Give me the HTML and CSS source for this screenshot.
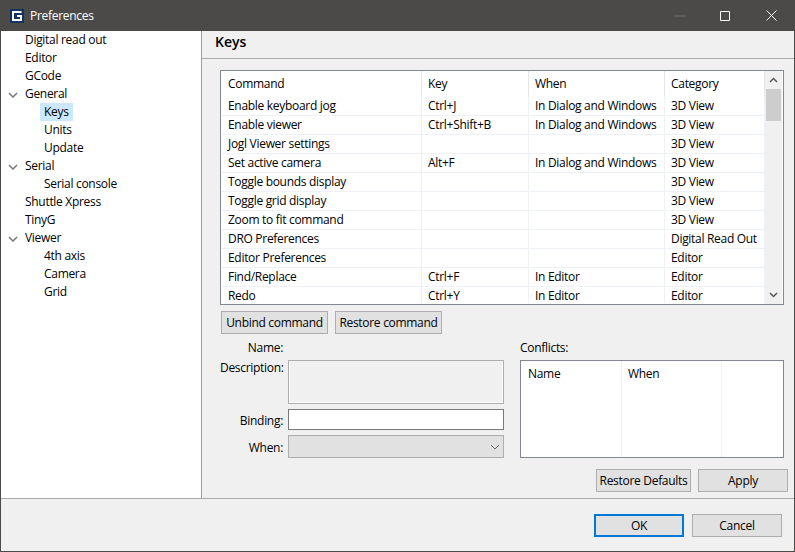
FILE: index.html
```html
<!DOCTYPE html>
<html lang="en">
<head>
<meta charset="utf-8">
<title>Preferences</title>
<link rel="stylesheet" href="styles.css">
</head>
<body>
<div class="window">
  <header class="titlebar">
    <svg class="app-icon" width="14" height="14" viewBox="0 0 14 14"><rect width="14" height="14" fill="#12355f"/><path d="M11.500 3H3v8h8V7H7" fill="none" stroke="#fff" stroke-width="2"/></svg>
    <span class="title">Preferences</span>
    <div class="controls">
      <svg class="ctl ctl-min" width="10" height="10" viewBox="0 0 10 10"><path d="M0 5h10" stroke="#77756f"/></svg>
      <svg class="ctl ctl-max" width="10" height="10" viewBox="0 0 10 10"><path d="M.5.5h9v9h-9z" fill="none" stroke="#fff"/></svg>
      <svg class="ctl ctl-close" width="11" height="11" viewBox="0 0 11 11"><path d="M.5.5l10 10M10.500.5l-10 10" stroke="#fff" fill="none"/></svg>
    </div>
  </header>
  <div class="body">
    <nav class="tree">
      <div class="node">Digital read out</div>
      <div class="node">Editor</div>
      <div class="node">GCode</div>
      <div class="node"><svg class="twist" width="10" height="6" viewBox="0 0 10 6"><path d="M1 1l4 4 4-4" fill="none" stroke="#777" stroke-width="1.500"/></svg>General</div>
      <div class="node sub"><span class="selected">Keys</span></div>
      <div class="node sub">Units</div>
      <div class="node sub">Update</div>
      <div class="node"><svg class="twist" width="10" height="6" viewBox="0 0 10 6"><path d="M1 1l4 4 4-4" fill="none" stroke="#777" stroke-width="1.500"/></svg>Serial</div>
      <div class="node sub">Serial console</div>
      <div class="node">Shuttle Xpress</div>
      <div class="node">TinyG</div>
      <div class="node"><svg class="twist" width="10" height="6" viewBox="0 0 10 6"><path d="M1 1l4 4 4-4" fill="none" stroke="#777" stroke-width="1.500"/></svg>Viewer</div>
      <div class="node sub">4th axis</div>
      <div class="node sub">Camera</div>
      <div class="node sub">Grid</div>
    </nav>
    <main class="page">
      <h1 class="page-title">Keys</h1>
      <div class="page-body">
        <div class="keys-table">
          <div class="cols">
            <div class="row head"><span>Command</span><span>Key</span><span>When</span><span>Category</span></div>
            <div class="row"><span>Enable keyboard jog</span><span>Ctrl+J</span><span>In Dialog and Windows</span><span>3D View</span></div>
            <div class="row"><span>Enable viewer</span><span>Ctrl+Shift+B</span><span>In Dialog and Windows</span><span>3D View</span></div>
            <div class="row"><span>Jogl Viewer settings</span><span></span><span></span><span>3D View</span></div>
            <div class="row"><span>Set active camera</span><span>Alt+F</span><span>In Dialog and Windows</span><span>3D View</span></div>
            <div class="row"><span>Toggle bounds display</span><span></span><span></span><span>3D View</span></div>
            <div class="row"><span>Toggle grid display</span><span></span><span></span><span>3D View</span></div>
            <div class="row"><span>Zoom to fit command</span><span></span><span></span><span>3D View</span></div>
            <div class="row"><span>DRO Preferences</span><span></span><span></span><span>Digital Read Out</span></div>
            <div class="row"><span>Editor Preferences</span><span></span><span></span><span>Editor</span></div>
            <div class="row"><span>Find/Replace</span><span>Ctrl+F</span><span>In Editor</span><span>Editor</span></div>
            <div class="row"><span>Redo</span><span>Ctrl+Y</span><span>In Editor</span><span>Editor</span></div>
          </div>
          <div class="scrollbar">
            <svg width="9" height="6" viewBox="0 0 9 6"><path d="M1 5l3.500-3.500L8 5" fill="none" stroke="#555" stroke-width="1.500"/></svg>
            <div class="thumb"></div>
            <svg class="down" width="9" height="6" viewBox="0 0 9 6"><path d="M1 1l3.500 3.500L8 1" fill="none" stroke="#555" stroke-width="1.500"/></svg>
          </div>
        </div>
        <div class="cmd-buttons">
          <button class="btn unbind">Unbind command</button>
          <button class="btn restore">Restore command</button>
        </div>
        <div class="detail">
          <div class="form">
            <label class="lbl lbl-name">Name:</label><div class="name-val"></div>
            <label class="lbl lbl-top">Description:</label><div class="desc"></div>
            <label class="lbl lbl-binding">Binding:</label><div class="binding"></div>
            <label class="lbl lbl-when">When:</label>
            <div class="combo"><svg width="10" height="6" viewBox="0 0 10 6"><path d="M1 1l4 4 4-4" fill="none" stroke="#666"/></svg></div>
          </div>
          <div class="conflicts">
            <div class="conf-label">Conflicts:</div>
            <div class="conf-table">
              <div class="conf-col c1"><span>Name</span></div>
              <div class="conf-col c2"><span>When</span></div>
              <div class="conf-col c3"></div>
            </div>
          </div>
        </div>
        <div class="page-actions">
          <button class="btn defaults">Restore Defaults</button>
          <button class="btn wide">Apply</button>
        </div>
      </div>
    </main>
  </div>
  <footer class="footer">
    <button class="btn wide ok">OK</button>
    <button class="btn wide">Cancel</button>
  </footer>
</div>
</body>
</html>
```
FILE: styles.css
```css
* { box-sizing: border-box; }
html, body { margin: 0; padding: 0; }
body { width: 795px; height: 552px; overflow: hidden; font: 12px/16px "Open Sans", "Noto Sans", sans-serif; letter-spacing: -.3px; color: #000; }
.window { width: 795px; height: 552px; display: flex; flex-direction: column; background: #f0f0f0; border: 1px solid #4c4a48; border-top: 0; }
.titlebar { height: 31px; flex: none; margin: 0 -1px; background: #4c4a48; color: #fff; display: flex; align-items: center; padding-left: 10px; }
.title { margin-left: 6px; padding-top: 1px; }
.controls { margin-left: auto; display: flex; align-items: center; }
.ctl { display: block; }
.ctl-min { margin-right: 35px; }
.ctl-max { margin-right: 36px; }
.ctl-close { margin-right: 18px; }
.body { flex: 1; display: flex; min-height: 0; }
.tree { width: 201px; flex: none; background: #fff; border-right: 1px solid #a0a0a0; }
.node { height: 18px; line-height: 18px; padding-left: 24px; position: relative; white-space: nowrap; }
.node.sub { padding-left: 43px; }
.selected { display: inline-block; background: #cce8ff; padding: 0 4px; margin-left: -4px; height: 18px; }
.twist { position: absolute; left: 7px; top: 7px; }
.page { flex: 1; display: flex; flex-direction: column; min-width: 0; }
.page-title { margin: 0; height: 28px; flex: none; border-bottom: 1px solid #a9a9a9; padding: 2px 0 0 13px; font-size: 14px; line-height: 18px; font-weight: 600; letter-spacing: 0; }
.page-body { flex: 1; padding: 11px 6px 0 18px; }
.keys-table { width: 564px; height: 235px; background: #fff; border: 1px solid #828790; display: flex; overflow: hidden; padding-left: 1px; }
.cols { width: 543px; flex: none; }
.row { display: grid; grid-template-columns: 200px 107px 136px 100px; height: 19px; }
.row span { border-right: 1px solid #eef1f6; border-bottom: 1px solid #eef1f6; padding-left: 6px; line-height: 18px; white-space: nowrap; overflow: hidden; }
.row.head { height: 26px; }
.row.head span { line-height: 25px; border-bottom: 0; border-right-color: #e5e5e5; }
.scrollbar { width: 17px; background: #f0f0f0; display: flex; flex-direction: column; align-items: center; padding-top: 6px; }
.thumb { width: 15px; height: 32px; background: #cdcdcd; margin-top: 6px; }
.down { margin-top: auto; margin-bottom: 6px; }
.cmd-buttons { display: flex; gap: 7px; margin: 6px 0 0 1px; }
.btn { height: 23px; padding: 0; background: #e1e1e1; border: 1px solid #adadad; font: inherit; letter-spacing: inherit; color: #000; line-height: 19px; }
.unbind, .restore { width: 107px; }
.detail { display: flex; margin-top: 6px; }
.form { width: 284px; display: grid; grid-template-columns: 63px 216px; column-gap: 5px; grid-template-rows: 20px 44px 26px 28px; }
.lbl { text-align: right; line-height: 16px; }
.lbl-top { padding-top: 0; }
.lbl-binding { padding-top: 9px; }
.lbl-when { padding-top: 10px; }
.desc { background: #f0f0f0; border: 1px solid #adadad; height: 44px; box-shadow: inset 1px 0 #fff, inset -1px 0 #fff, inset 0 -1px #fff; }
.binding { background: #fff; border: 1px solid #7a7a7a; height: 21px; margin-top: 5px; }
.combo { height: 23px; margin-top: 5px; background: #e1e1e1; border: 1px solid #adadad; display: flex; align-items: center; justify-content: flex-end; padding-right: 3px; }
.conflicts { margin-left: 16px; width: 264px; }
.conf-label { height: 20px; line-height: 16px; }
.conf-table { height: 98px; background: #fff; border: 1px solid #828790; display: flex; padding-left: 1px; }
.conf-col { width: 100px; border-right: 1px solid #eef1f6; padding-left: 6px; line-height: 25px; }
.conf-col.c3 { border-right: 0; flex: 1; }
.page-actions { display: flex; justify-content: flex-end; gap: 7px; margin-top: 11px; }
.defaults { width: 95px; }
.wide { width: 90px; }
.footer { height: 53px; flex: none; border-top: 1px solid #a9a9a9; display: flex; justify-content: flex-end; gap: 8px; padding: 15px 12px 0 0; }
.ok { border: 2px solid #0078d7; }
```
